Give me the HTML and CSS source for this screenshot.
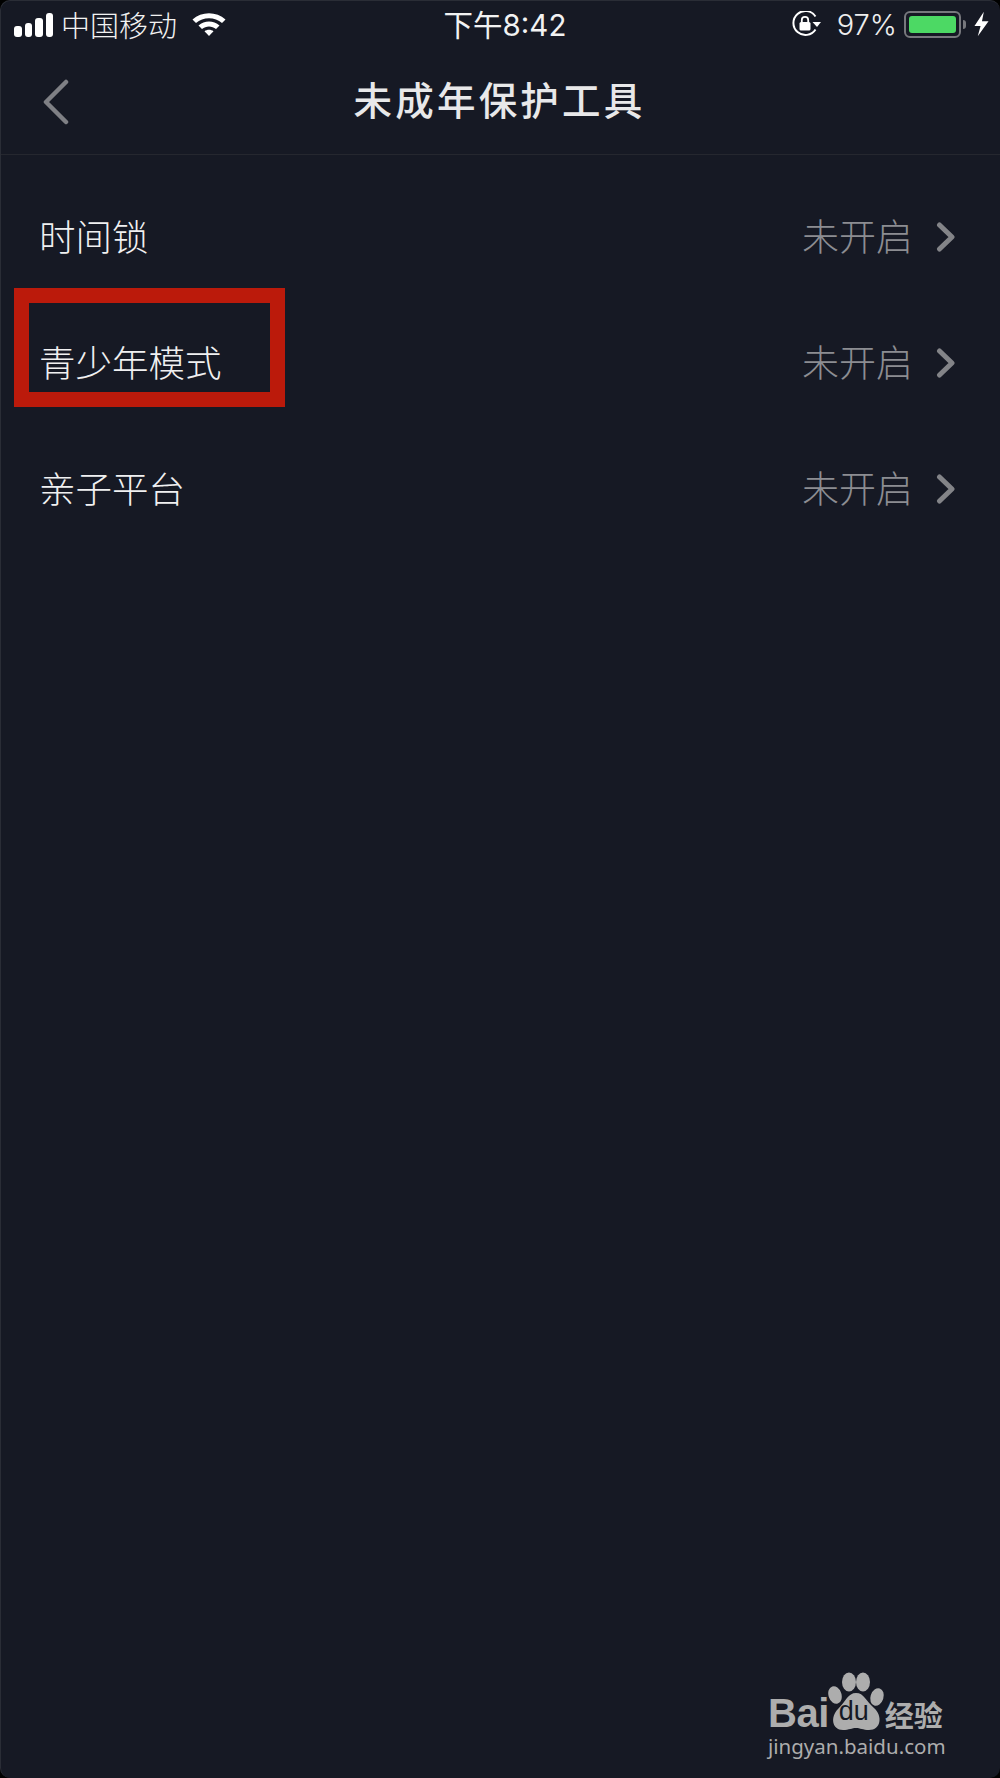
FILE: index.html
```html
<!DOCTYPE html>
<html lang="zh-CN">
<head>
    <meta charset="UTF-8">
    <meta name="viewport" content="width=device-width, initial-scale=1.0">
    <title>未成年保护工具</title>
    <link rel="stylesheet" href="styles.css">
</head>
<body>
    <div class="phone">
        <div class="status-bar">
            <div class="status-left">
                <div class="signal"><i class="s1"></i><i class="s2"></i><i class="s3"></i><i class="s4"></i></div>
                <span class="carrier">中国移动</span>
                <svg class="wifi" width="34" height="26" viewBox="0 0 34 26">
                    <path d="M0.5 8.5C9.5 0 24.500 0 33.500 8.500L30 12C23 5.500 11 5.500 4 12Z" fill="#fff"/>
                    <path d="M6.500 14.500C12.500 9.300 21.500 9.300 27.500 14.500L24 18C20 14.600 14 14.600 10 18Z" fill="#fff"/>
                    <path d="M12.500 20.300C15 18.300 19 18.300 21.500 20.300L17 25Z" fill="#fff"/>
                </svg>
            </div>
            <div class="status-time">下午8:42</div>
            <div class="status-right">
                <svg class="lock" width="30" height="26" viewBox="0 0 30 26">
                    <path d="M23.500 18.500A12 12 0 1 1 23.500 5.500" fill="none" stroke="#fff" stroke-width="2"/>
                    <path d="M20.500 11H29L25 16Z" fill="#fff"/>
                    <rect x="7.500" y="11" width="11" height="8.500" rx="1.500" fill="#fff"/>
                    <path d="M9.800 11V9a3.200 3.200 0 0 1 6.400 0V11" fill="none" stroke="#fff" stroke-width="1.800"/>
                </svg>
                <span class="percent">97%</span>
                <div class="battery"><div class="battery-fill"></div></div>
                <div class="battery-tip"></div>
                <svg class="bolt" width="15" height="26" viewBox="0 0 16 26">
                    <path d="M10.500 0L0.500 15H7L4 26L15.500 10H8.500Z" fill="#fff"/>
                </svg>
            </div>
        </div>

        <div class="nav-bar">
            <svg class="back" width="28" height="46" viewBox="0 0 28 46">
                <path d="M24 3L4 23L24 43" fill="none" stroke="#7f8085" stroke-width="4.500" stroke-linecap="round" stroke-linejoin="round"/>
            </svg>
            <div class="nav-title">未成年保护工具</div>
        </div>

        <div class="list">
            <div class="row">
                <span class="row-label">时间锁</span>
                <span class="row-value">未开启</span>
                <svg class="chevron" width="20" height="30" viewBox="0 0 20 30"><path d="M3.500 3L16 15L3.500 27" fill="none" stroke="#838488" stroke-width="5" stroke-linecap="round" stroke-linejoin="round"/></svg>
            </div>
            <div class="row">
                <span class="row-label">青少年模式</span>
                <span class="row-value">未开启</span>
                <svg class="chevron" width="20" height="30" viewBox="0 0 20 30"><path d="M3.500 3L16 15L3.500 27" fill="none" stroke="#838488" stroke-width="5" stroke-linecap="round" stroke-linejoin="round"/></svg>
            </div>
            <div class="row">
                <span class="row-label">亲子平台</span>
                <span class="row-value">未开启</span>
                <svg class="chevron" width="20" height="30" viewBox="0 0 20 30"><path d="M3.500 3L16 15L3.500 27" fill="none" stroke="#838488" stroke-width="5" stroke-linecap="round" stroke-linejoin="round"/></svg>
            </div>
        </div>

        <div class="highlight"></div>

        <div class="watermark">
            <div class="wm-top">
                <span class="wm-bai">Bai</span>
                <div class="wm-paw">
                    <svg width="58" height="60" viewBox="0 0 58 60">
                        <ellipse cx="7" cy="23" rx="6.500" ry="9" transform="rotate(-18 7 23)" fill="#adadad"/>
                        <ellipse cx="21" cy="10" rx="7" ry="9.500" fill="#adadad"/>
                        <ellipse cx="35" cy="10" rx="7" ry="9.500" fill="#adadad"/>
                        <ellipse cx="49" cy="25" rx="6.500" ry="9" transform="rotate(18 49 25)" fill="#adadad"/>
                        <path d="M28 21C36 21 38 29 46 36C55 44 53 58 41 58C35 58 32 56 28 56C24 56 21 58 15 58C4 58 2 45 10 37C18 29 20 21 28 21Z" fill="#adadad"/>
                    </svg>
                    <span class="wm-du">du</span>
                </div>
                <span class="wm-jy">经验</span>
            </div>
            <div class="wm-url">jingyan.baidu.com</div>
        </div>
    </div>
</body>
</html>
```

FILE: styles.css
```css
* {
    box-sizing: border-box;
}

body {
    margin: 0;
    background-color: #000;
    font-family: "Noto Sans CJK SC", "Liberation Sans", sans-serif;
}

.phone {
    position: relative;
    width: 1000px;
    height: 1778px;
    overflow: hidden;
    background-color: #161924;
    border-radius: 10px;
    border-top: 1px solid #2a2d36;
    border-left: 1px solid #2a2d36;
    color: #fff;
}

/* status bar */
.status-bar {
    display: grid;
    grid-template-columns: 1fr auto 1fr;
    align-items: center;
    height: 46px;
    padding: 0 11px 0 13px;
}

.status-left,
.status-right {
    display: flex;
    align-items: center;
}

.status-right {
    justify-content: flex-end;
}

.signal {
    display: flex;
    align-items: flex-end;
    gap: 3px;
    height: 24px;
    margin-top: 2px;
}

.signal i {
    display: block;
    width: 7.500px;
    background-color: #fff;
    border-radius: 3px;
}

.s1 { height: 11px; }
.s2 { height: 14px; }
.s3 { height: 19px; }
.s4 { height: 24px; }

.carrier {
    margin-left: 8px;
    font-size: 29px;
    font-weight: 300;
    line-height: 36px;
    color: #f2f2f2;
}

.wifi {
    margin-left: 15px;
}

.status-time {
    font-family: "Inter", "Noto Sans CJK SC", sans-serif;
    font-size: 29.500px;
    line-height: 36px;
    color: #f2f2f2;
    margin-left: 7px;
    margin-top: 2px;
}

.lock {
    margin-right: 15px;
}

.percent {
    font-family: "Inter", "Noto Sans", sans-serif;
    font-size: 29px;
    font-weight: 300;
    color: #eee;
    margin-right: 7px;
}

.battery {
    width: 57px;
    height: 27px;
    padding: 3px;
    border: 2px solid #77787d;
    border-radius: 6px;
}

.battery-fill {
    height: 100%;
    background-color: #4cd964;
    border-radius: 3px;
}

.battery-tip {
    width: 3px;
    height: 9px;
    margin-left: 2px;
    margin-right: 8px;
    background-color: #77787d;
    border-radius: 0 3px 3px 0;
}

/* nav */
.nav-bar {
    position: relative;
    display: flex;
    align-items: center;
    justify-content: center;
    height: 108px;
    border-bottom: 1px solid #25272f;
}

.back {
    position: absolute;
    left: 41px;
    top: 32px;
}

.nav-title {
    font-size: 38.500px;
    font-weight: 500;
    letter-spacing: 3.200px;
    color: #e8e8e9;
    margin-top: -6px;
    margin-left: -2px;
}

/* rows */
.list {
    padding-top: 19px;
}

.row {
    display: flex;
    align-items: center;
    height: 126px;
    padding: 0 44px 0 38px;
}

.row-label {
    flex: 1;
    margin-top: -4px;
    font-size: 36.500px;
    font-weight: 300;
    color: #f0f0f1;
}

.row-value {
    margin-top: -4px;
    font-size: 37px;
    font-weight: 300;
    color: #8c8d92;
}

.chevron {
    margin-left: 23px;
}

/* red annotation box */
.highlight {
    position: absolute;
    left: 13px;
    top: 287px;
    width: 271px;
    height: 119px;
    border: 15px solid #bb1a0b;
}

/* watermark */
.watermark {
    position: absolute;
    left: 767px;
    top: 1671px;
    color: #adadad;
}

.wm-top {
    display: flex;
    align-items: flex-end;
    height: 63px;
}

.wm-bai {
    font-family: "Liberation Sans", sans-serif;
    font-weight: 700;
    font-size: 40px;
    line-height: 40px;
    letter-spacing: -0.500px;
    margin-bottom: 2px;
}

.wm-paw {
    position: relative;
    align-self: flex-start;
    width: 57px;
    height: 60px;
    margin-left: -1px;
}

.wm-du {
    position: absolute;
    left: 11px;
    top: 26px;
    font-family: "Liberation Sans", sans-serif;
    font-size: 27px;
    line-height: 27px;
    color: #161924;
}

.wm-jy {
    font-size: 29px;
    font-weight: 700;
    line-height: 36px;
    margin-left: 0;
    margin-bottom: 3px;
}

.wm-url {
    font-family: "Noto Sans", sans-serif;
    font-size: 20.500px;
    line-height: 22px;
}
```
